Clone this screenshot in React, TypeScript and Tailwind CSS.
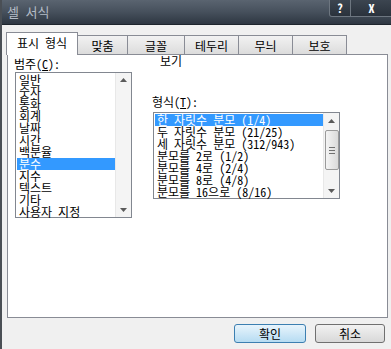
import React from 'react';

const font = { fontFamily: '"Noto Sans Mono CJK KR", "Noto Sans CJK KR", "Liberation Sans", sans-serif' };

const categories = ['일반', '숫자', '통화', '회계', '날짜', '시간', '백분율', '분수', '지수', '텍스트', '기타', '사용자 지정'];

const formats = [
  '한 자릿수 분모 (1/4)',
  '두 자릿수 분모 (21/25)',
  '세 자릿수 분모 (312/943)',
  '분모를 2로 (1/2)',
  '분모를 4로 (2/4)',
  '분모를 8로 (4/8)',
  '분모를 16으로 (8/16)',
];

const tabs = ['맞춤', '글꼴', '테두리', '무늬', '보호'];
const tabWidths = ['w-[50px]', 'w-[57px]', 'w-[54px]', 'w-[54px]', 'w-[54px]'];

// tiny arrow used by the scrollbars
const Arrow = ({ up }: { up?: boolean }) => (
  <svg width="7" height="4" viewBox="0 0 7 4">
    <path d={up ? 'M0 4 L3.5 0 L7 4 Z' : 'M0 0 L3.5 4 L7 0 Z'} fill="#5a5a5a" />
  </svg>
);

const ListItem = ({ text, selected }: { text: string; selected?: boolean }) => (
  <div
    className={`h-[12px] leading-[12px] pl-[2px] whitespace-nowrap ${
      selected ? 'bg-[#3399ff] text-white' : 'text-black'
    }`}
  >
    {text}
  </div>
);

export default function App() {
  return (
    <div
      className="w-[391px] h-[349px] overflow-hidden bg-[#f0f0f0] flex flex-col border-l-2 border-[#4a4f55] text-[12px]"
      style={font}
    >
      {/* title bar */}
      <div className="h-[25px] shrink-0 flex items-start justify-between bg-gradient-to-b from-[#5a6470] via-[#46505c] to-[#2e3742] border-b border-[#1e252d]">
        <span className="mt-[5px] ml-[5px] text-[13px] leading-[14px] text-[#b4bcc6]">셀 서식</span>
        <div className="flex h-[17px] mr-[-2px]">
          <div className="w-[22px] flex items-center justify-center border border-t-0 border-[#6d7680] rounded-bl-[3px] bg-gradient-to-b from-[#3c4550] to-[#2a323c] text-white font-bold text-[12px]">
            ?
          </div>
          <div className="w-[42px] flex items-center justify-center border border-t-0 border-l-0 border-[#6d7680] bg-gradient-to-b from-[#3c4550] to-[#2a323c] text-white font-bold text-[12px]">
            X
          </div>
        </div>
      </div>

      {/* tab row */}
      <div className="ml-[4px] mt-[7px] h-[22px] flex items-end">
        <div className="relative z-10 w-[72px] h-[23px] -mb-px bg-white border border-b-0 border-[#898c95] flex justify-center pt-[3px] leading-[14px]">
          표시 형식
        </div>
        {tabs.map((t, i) => (
          <div
            key={t}
            className={`${tabWidths[i]} h-[19px] border border-b-0 border-l-0 border-[#898c95] bg-gradient-to-b from-[#f2f2f2] to-[#dcdcdc] flex justify-center pt-[3px] leading-[13px]`}
          >
            {t}
          </div>
        ))}
      </div>

      {/* panel */}
      <div className="ml-[5px] w-[381px] h-[264px] shrink-0 bg-white border border-[#898c95] flex">
        <div className="ml-[6px] mt-[2px] flex flex-col">
          <div className="h-[15px] leading-[14px]">
            범주(<span className="underline">C</span>):
          </div>
          <div className="ml-[1px] w-[117px] h-[146px] border border-[#828790] flex">
            <div className="flex-1 pt-px pl-px">
              {categories.map((c) => (
                <ListItem key={c} text={c} selected={c === '분수'} />
              ))}
            </div>
            <div className="w-[16px] bg-[#f4f4f4] flex flex-col justify-between items-center py-[5px] border-l border-[#e8e8e8]">
              <Arrow up />
              <Arrow />
            </div>
          </div>
        </div>

        <div className="ml-[20px] flex flex-col">
          <div className="ml-[8px] h-[14px] leading-[12px]">보기</div>
          <div className="mt-[27px] h-[16px] leading-[12px]">
            형식(<span className="underline">T</span>):
          </div>
          <div className="ml-[1px] w-[187px] h-[87px] border border-[#828790] flex">
            <div className="flex-1 pt-px pl-px">
              {formats.map((f, i) => (
                <ListItem key={f} text={f} selected={i === 0} />
              ))}
            </div>
            <div className="w-[16px] bg-[#f4f4f4] flex flex-col items-center border-l border-[#e8e8e8]">
              <div className="h-[15px] flex items-center">
                <Arrow up />
              </div>
              <div className="w-[14px] h-[40px] mt-[2px] rounded-[2px] border border-[#9a9a9a] bg-gradient-to-r from-[#f4f4f4] to-[#dadada] flex flex-col items-center justify-center gap-[2px]">
                <div className="w-[6px] h-px bg-[#707070]" />
                <div className="w-[6px] h-px bg-[#707070]" />
                <div className="w-[6px] h-px bg-[#707070]" />
              </div>
              <div className="flex-1" />
              <div className="h-[15px] flex items-center">
                <Arrow />
              </div>
            </div>
          </div>
        </div>
      </div>

      {/* buttons */}
      <div className="mt-[6px] flex justify-end gap-[9px] pr-[6px]">
        <button className="w-[72px] h-[19px] rounded-[3px] border border-[#3c7fb1] bg-gradient-to-b from-[#e8f4fc] to-[#b6dcf2] leading-[14px] text-black">
          확인
        </button>
        <button className="w-[70px] h-[19px] rounded-[3px] border border-[#707070] bg-gradient-to-b from-[#f2f2f2] to-[#d8d8d8] leading-[14px] text-black">
          취소
        </button>
      </div>
    </div>
  );
}
